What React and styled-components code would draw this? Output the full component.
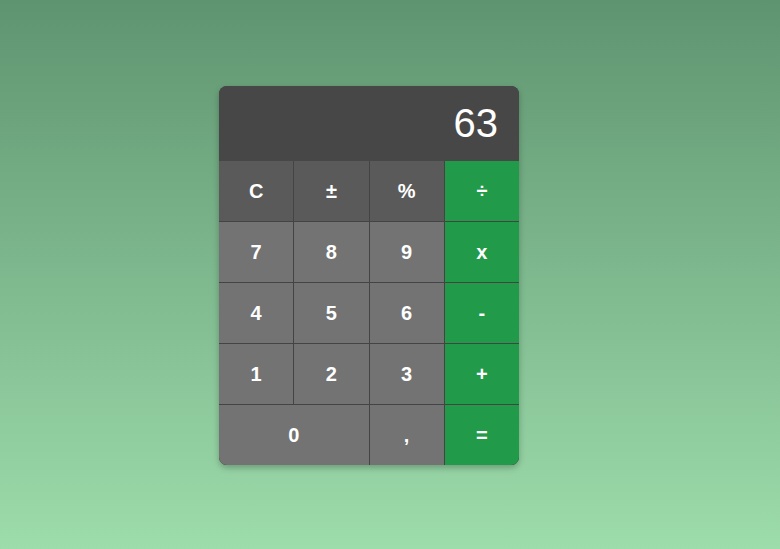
import React from "react";
import styled, { createGlobalStyle } from "styled-components";

const Global = createGlobalStyle`
  html, body { margin: 0; padding: 0; height: 100%; }
  body {
    font-family: "Liberation Sans", Arial, sans-serif;
    background: linear-gradient(to bottom, #5f9470, #9ddcab);
  }
  #root { height: 100%; }
`;

const Page = styled.div`
  height: 549px;
  display: flex;
  justify-content: flex-start;
  align-items: flex-start;
  padding: 86px 0 0 219px;
  box-sizing: border-box;
`;

const Calc = styled.div`
  width: 300px;
  border-radius: 8px;
  overflow: hidden;
  background: #444;
  box-shadow: 0 3px 6px rgba(0, 0, 0, 0.25);
`;

const Display = styled.div`
  height: 75px;
  background: #474747;
  color: #fff;
  font-size: 40px;
  display: flex;
  align-items: center;
  justify-content: flex-end;
  padding: 0 21px 0 0;
  box-sizing: border-box;
`;

const Keys = styled.div`
  display: grid;
  grid-template-columns: repeat(4, 1fr);
  grid-auto-rows: 60px;
  gap: 1px;
  background: #444;
`;

const Key = styled.div`
  display: flex;
  align-items: center;
  justify-content: center;
  color: #fff;
  font-weight: bold;
  font-size: 20px;
  grid-column: ${(p) => (p.$wide ? "span 2" : "auto")};
  background: ${(p) =>
    p.$kind === "op" ? "#219a4a" : p.$kind === "fn" ? "#5a5a5a" : "#737373"};
`;

const rows = [
  [["C", "fn"], ["±", "fn"], ["%", "fn"], ["÷", "op"]],
  [["7"], ["8"], ["9"], ["x", "op"]],
  [["4"], ["5"], ["6"], ["-", "op"]],
  [["1"], ["2"], ["3"], ["+", "op"]],
  [["0", "num", true], [","], ["=", "op"]],
];

export default function App() {
  return (
    <>
      <Global />
      <Page>
        <Calc>
          <Display>63</Display>
          <Keys>
            {rows.flat().map(([label, kind, wide], i) => (
              <Key key={i} $kind={kind || "num"} $wide={wide}>
                {label}
              </Key>
            ))}
          </Keys>
        </Calc>
      </Page>
    </>
  );
}
